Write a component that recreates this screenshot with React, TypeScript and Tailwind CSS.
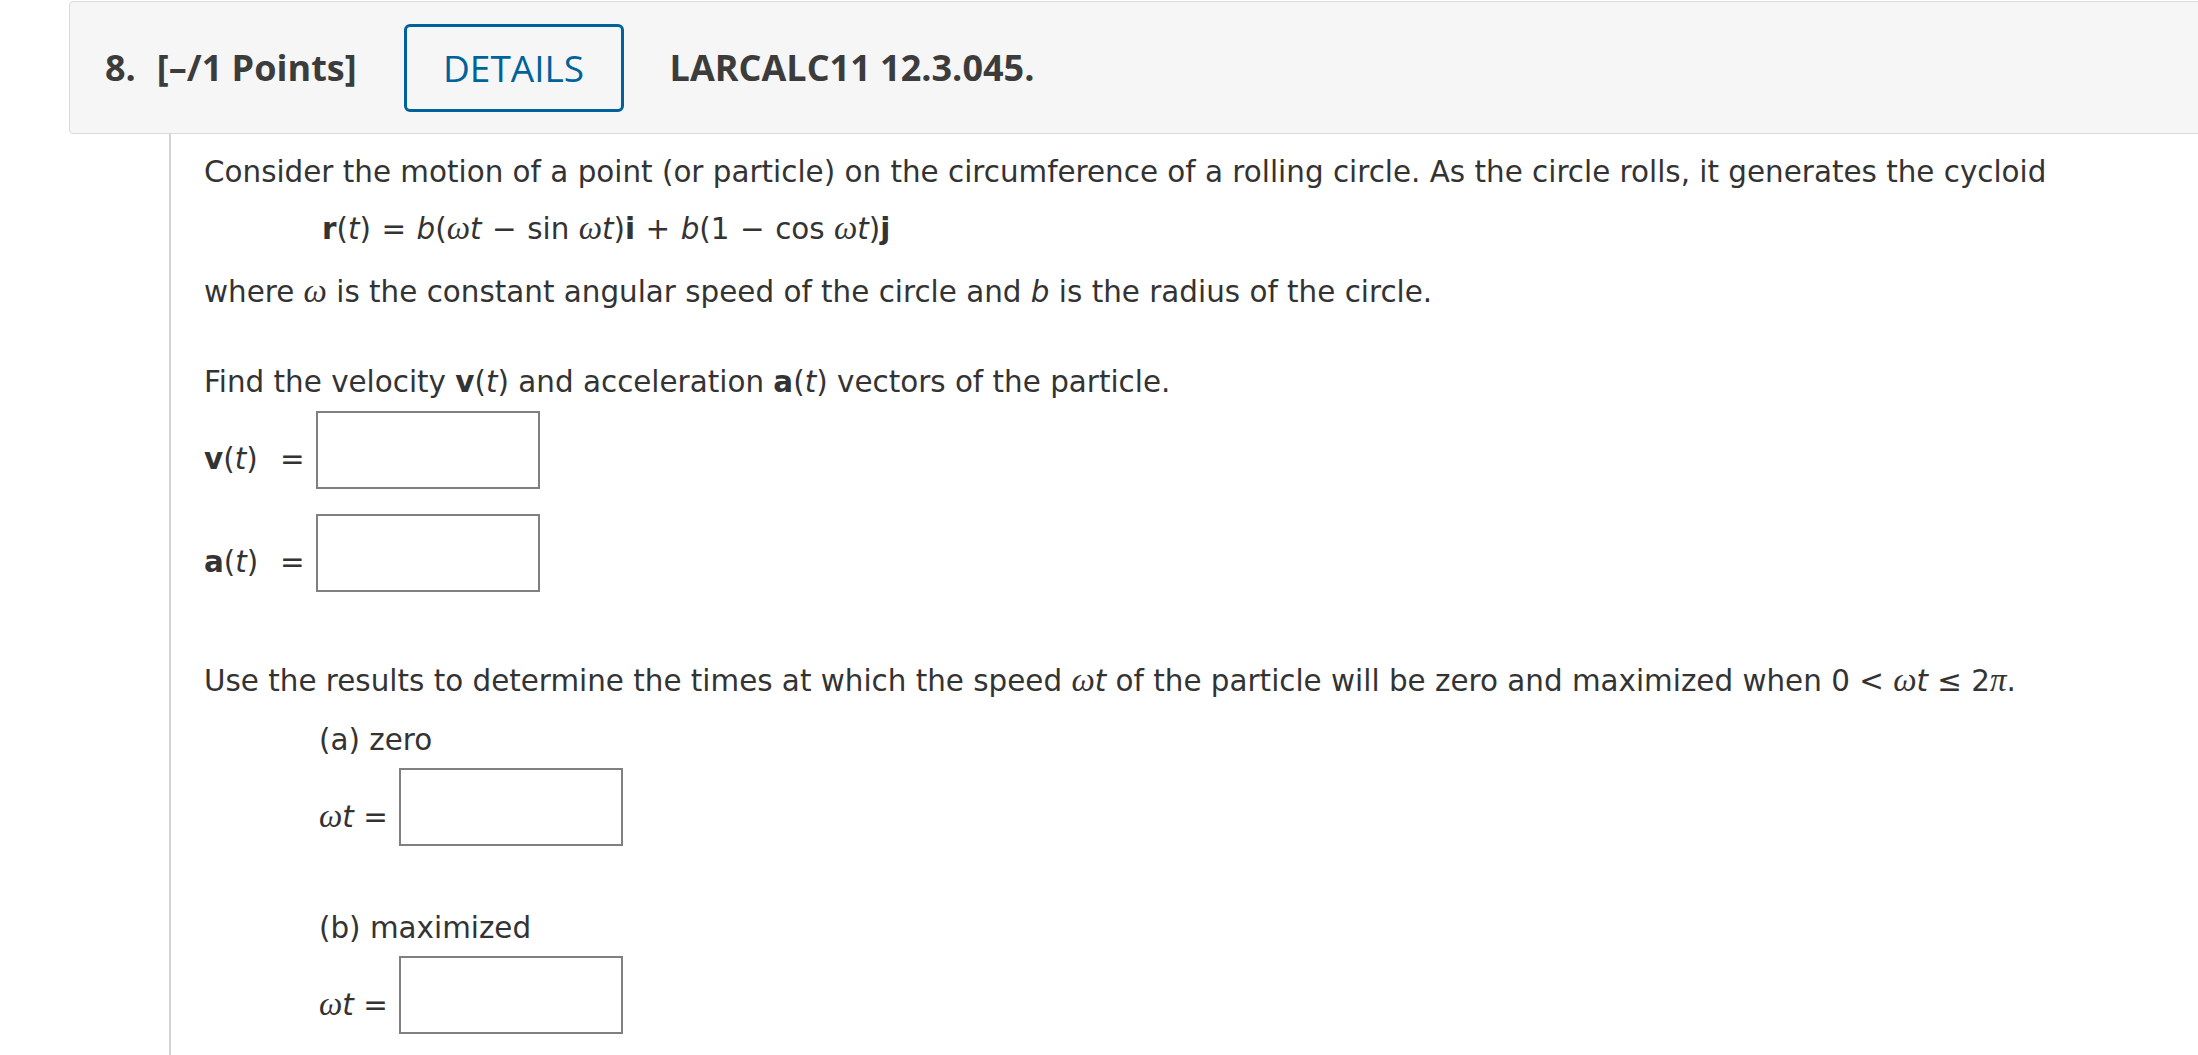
import React from 'react'

function W() {
  return <i className="font-['Liberation_Serif'] text-[33px]">ω</i>
}

function T() {
  return <i>t</i>
}

function AnswerBox() {
  return <div className="h-[78px] w-[224px] border-2 border-[#808080] bg-white" />
}

function Op({ children }: { children: React.ReactNode }) {
  return <span className="mx-[10.5px]">{children}</span>
}

export default function App() {
  return (
    <div className="h-[1055px] w-full overflow-hidden bg-white">
      <div className="ml-[69px] mr-[-8px] mt-px flex h-[133px] items-center rounded-[4px] border border-[#dadada] bg-[#f6f6f6] pl-[35px] font-['Open_Sans'] text-[36px] font-bold text-[#3c3c3c]">
        <span>8.</span>
        <span className="ml-[21px]">[–/1 Points]</span>
        <button className="ml-[47px] flex h-[88px] w-[220px] items-center justify-center rounded-[6px] border-[3px] border-[#00629b] text-[37px] font-normal text-[#00629b]">
          DETAILS
        </button>
        <span className="ml-[46px]">LARCALC11 12.3.045.</span>
      </div>

      <div className="ml-[169px] flex h-[922px] flex-col border-l-2 border-[#d3d3d3] pl-[33px] pt-[18px] font-['DejaVu_Sans'] text-[29.4px] leading-[40px] text-[#333]">
        <p>
          Consider the motion of a point (or particle) on the circumference of a rolling circle. As the circle
          rolls, it generates the cycloid
        </p>
        <p className="ml-[118px] mt-[16px]">
          <b>r</b>(<T />)<Op>=</Op>
          <i>b</i>(<W />
          <T />
          <Op>−</Op>sin <W />
          <T />)<b>i</b>
          <Op>+</Op>
          <i>b</i>(1<Op>−</Op>cos <W />
          <T />)<b>j</b>
        </p>
        <p className="mt-[22px]">
          where <W /> is the constant angular speed of the circle and <i>b</i> is the radius of the circle.
        </p>

        <p className="mt-[50px]">
          Find the velocity <b>v</b>(<T />) and acceleration <b>a</b>(<T />) vectors of the particle.
        </p>
        <div className="mt-[9px] flex items-center">
          <span className="w-[76px] pt-[17px]">
            <b>v</b>(<T />)
          </span>
          <span className="w-[36px] pt-[17px]">=</span>
          <AnswerBox />
        </div>
        <div className="mt-[25px] flex items-center">
          <span className="w-[76px] pt-[17px]">
            <b>a</b>(<T />)
          </span>
          <span className="w-[36px] pt-[17px]">=</span>
          <AnswerBox />
        </div>

        <p className="mt-[68px]">
          Use the results to determine the times at which the speed <W />
          <T /> of the particle will be zero and maximized when 0 &lt; <W />
          <T /> ≤ 2<i className="font-['Liberation_Serif'] text-[33px]">π</i>.
        </p>
        <div className="ml-[115px]">
          <p className="mt-[19px]">(a) zero</p>
          <div className="mt-[8px] flex items-center">
            <span className="w-[80px] pt-[19px]">
              <W />
              <T /> =
            </span>
            <AnswerBox />
          </div>
          <p className="mt-[62px]">(b) maximized</p>
          <div className="mt-[8px] flex items-center">
            <span className="w-[80px] pt-[19px]">
              <W />
              <T /> =
            </span>
            <AnswerBox />
          </div>
        </div>
      </div>
    </div>
  )
}
